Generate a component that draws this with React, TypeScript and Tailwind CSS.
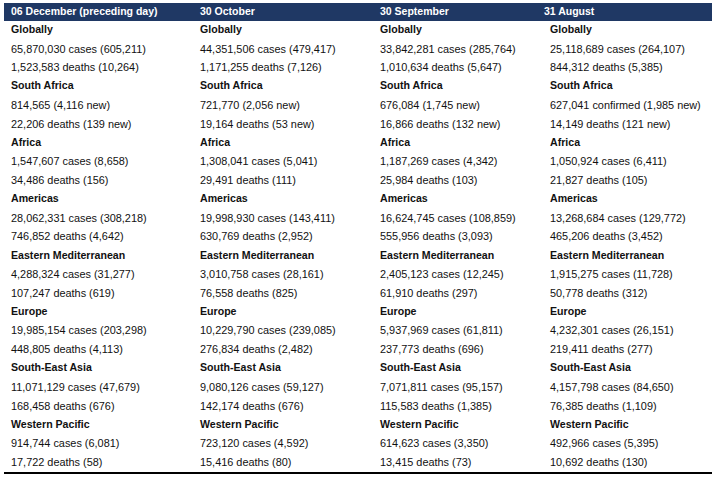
const periods = ["06 December (preceding day)", "30 October", "30 September", "31 August"];

const regions: { name: string; lines: string[][] }[] = [
  {
    name: "Globally",
    lines: [
      ["65,870,030 cases (605,211)", "44,351,506 cases (479,417)", "33,842,281 cases (285,764)", "25,118,689 cases (264,107)"],
      ["1,523,583 deaths (10,264)", "1,171,255 deaths (7,126)", "1,010,634 deaths (5,647)", "844,312 deaths (5,385)"],
    ],
  },
  {
    name: "South Africa",
    lines: [
      ["814,565 (4,116 new)", "721,770 (2,056 new)", "676,084 (1,745 new)", "627,041 confirmed (1,985 new)"],
      ["22,206 deaths (139 new)", "19,164 deaths (53 new)", "16,866 deaths (132 new)", "14,149 deaths (121 new)"],
    ],
  },
  {
    name: "Africa",
    lines: [
      ["1,547,607 cases (8,658)", "1,308,041 cases (5,041)", "1,187,269 cases (4,342)", "1,050,924 cases (6,411)"],
      ["34,486 deaths (156)", "29,491 deaths (111)", "25,984 deaths (103)", "21,827 deaths (105)"],
    ],
  },
  {
    name: "Americas",
    lines: [
      ["28,062,331 cases (308,218)", "19,998,930 cases (143,411)", "16,624,745 cases (108,859)", "13,268,684 cases (129,772)"],
      ["746,852 deaths (4,642)", "630,769 deaths (2,952)", "555,956 deaths (3,093)", "465,206 deaths (3,452)"],
    ],
  },
  {
    name: "Eastern Mediterranean",
    lines: [
      ["4,288,324 cases (31,277)", "3,010,758 cases (28,161)", "2,405,123 cases (12,245)", "1,915,275 cases (11,728)"],
      ["107,247 deaths (619)", "76,558 deaths (825)", "61,910 deaths (297)", "50,778 deaths (312)"],
    ],
  },
  {
    name: "Europe",
    lines: [
      ["19,985,154 cases (203,298)", "10,229,790 cases (239,085)", "5,937,969 cases (61,811)", "4,232,301 cases (26,151)"],
      ["448,805 deaths (4,113)", "276,834 deaths (2,482)", "237,773 deaths (696)", "219,411 deaths (277)"],
    ],
  },
  {
    name: "South-East Asia",
    lines: [
      ["11,071,129 cases (47,679)", "9,080,126 cases (59,127)", "7,071,811 cases (95,157)", "4,157,798 cases (84,650)"],
      ["168,458 deaths (676)", "142,174 deaths (676)", "115,583 deaths (1,385)", "76,385 deaths (1,109)"],
    ],
  },
  {
    name: "Western Pacific",
    lines: [
      ["914,744 cases (6,081)", "723,120 cases (4,592)", "614,623 cases (3,350)", "492,966 cases (5,395)"],
      ["17,722 deaths (58)", "15,416 deaths (80)", "13,415 deaths (73)", "10,692 deaths (130)"],
    ],
  },
];

const cols = "grid grid-cols-[189px_180px_170px_169px]";

export default function App() {
  return (
    <div
      className="w-[715px] h-[477px] bg-white pl-[4px] pt-[3px] text-[10.9px] text-[#111]"
      style={{ fontFamily: '"Liberation Sans", Arial, sans-serif' }}
    >
      <div className="w-[708px]">
        <div className="grid grid-cols-[189px_180px_170px_157px] h-[17.5px] bg-[#1f3864] text-white font-bold text-[10.5px]">
          {periods.map((p, i) => (
            <div key={p} className={`flex items-center ${i === 3 ? "pl-[1px]" : "pl-[7px]"}`}>
              {p}
            </div>
          ))}
        </div>
        <div className="border-b-2 border-black">
          {regions.map((r) => (
            <div key={r.name}>
              <div className={cols}>
                {periods.map((p) => (
                  <div key={p} className="flex items-center h-[18.8px] pl-[7px] font-bold text-[10.6px]">
                    {r.name}
                  </div>
                ))}
              </div>
              {r.lines.map((line, li) => (
                <div key={li} className={cols}>
                  {line.map((t, ci) => (
                    <div key={ci} className="flex items-center h-[18.8px] pl-[7px] whitespace-nowrap">
                      {t}
                    </div>
                  ))}
                </div>
              ))}
            </div>
          ))}
        </div>
      </div>
    </div>
  );
}
